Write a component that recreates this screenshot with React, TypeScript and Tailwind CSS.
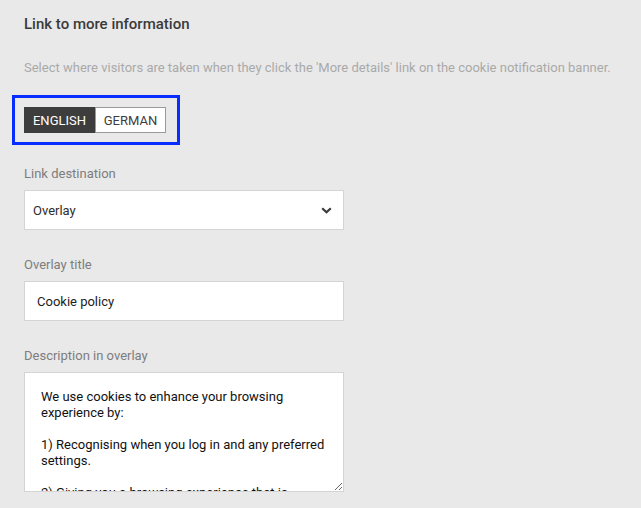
import { useState } from "react";

const description =
  "We use cookies to enhance your browsing experience by:\n\n1) Recognising when you log in and any preferred settings.\n\n2) Giving you a browsing experience that is personalised to you.";

export default function App() {
  const [lang, setLang] = useState("en");

  return (
    <div className="min-h-[508px] bg-[#e9e9e9] px-6 pt-[14px] font-['Roboto',sans-serif]">
      <h2 className="text-[15px] leading-5 font-medium text-[#3a3a3a]">Link to more information</h2>
      <p className="mt-[26px] text-[13px] leading-4 text-[#a9a9a9] whitespace-nowrap">
        Select where visitors are taken when they click the 'More details' link on the cookie notification banner.
      </p>

      <div className="mt-[19px] -ml-3 flex h-[50px] w-[168px] items-center border-[3px] border-[#0a2cff] pl-[9px]">
        <div className="flex h-[26px] text-[13px]">
          <button
            onClick={() => setLang("en")}
            className={
              lang === "en"
                ? "w-[71px] pt-px bg-[#3d3d3d] text-white border border-[#3d3d3d]"
                : "w-[71px] pt-px bg-white text-[#3d3d3d] border border-[#9a9a9a]"
            }
          >
            ENGLISH
          </button>
          <button
            onClick={() => setLang("de")}
            className={
              lang === "de"
                ? "w-[71px] pt-px bg-[#3d3d3d] text-white border border-[#3d3d3d]"
                : "w-[71px] pt-px bg-white text-[#3d3d3d] border border-[#9a9a9a]"
            }
          >
            GERMAN
          </button>
        </div>
      </div>

      <label className="mt-[21px] block text-[13px] leading-4 text-[#7d7d7d]">Link destination</label>
      <div className="mt-2 flex h-10 w-80 items-center justify-between border border-[#d4d4d4] bg-white pl-2 pr-[11px]">
        <span className="pt-px text-[13px] text-[#2e2e2e]">Overlay</span>
        <svg width="11" height="7" viewBox="0 0 11 7" fill="none">
          <path d="M1.2 1.2 L5.5 5.3 L9.8 1.2" stroke="#3a3a3a" strokeWidth="2.2" />
        </svg>
      </div>

      <label className="mt-[27px] block text-[13px] leading-4 text-[#7d7d7d]">Overlay title</label>
      <input
        defaultValue="Cookie policy"
        className="mt-2 block h-10 w-80 border border-[#d4d4d4] bg-white px-3 pt-px text-[13px] text-[#222] outline-none"
      />

      <label className="mt-[27px] block text-[13px] leading-4 text-[#7d7d7d]">Description in overlay</label>
      <textarea
        defaultValue={description}
        className="mt-2 block h-[120px] w-80 resize overflow-hidden border border-[#d4d4d4] bg-white px-4 pt-4 text-[13px] leading-4 text-[#111] outline-none"
      />
    </div>
  );
}
